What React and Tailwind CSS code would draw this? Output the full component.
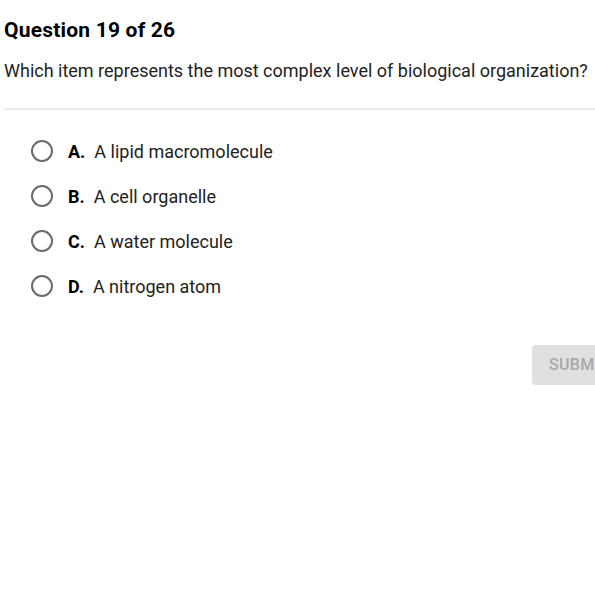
export default function App() {
  const options = [
    ["A.", "A lipid macromolecule"],
    ["B.", "A cell organelle"],
    ["C.", "A water molecule"],
    ["D.", "A nitrogen atom"],
  ];
  return (
    <div className="w-[595px] h-[594px] bg-white overflow-hidden relative" style={{ fontFamily: "Roboto, sans-serif" }}>
      <div className="pl-[4px] pt-[17px]">
        <div className="text-[21px] font-bold text-black leading-[26px] tracking-[0.2px]">Question 19 of 26</div>
        <div className="mt-[17px] text-[18px] text-[#222] leading-[22px] whitespace-nowrap">
          Which item represents the most complex level of biological organization?
        </div>
      </div>
      <div className="ml-[4px] mt-[26px] h-[2px] bg-[#ececec]" />
      <div className="pl-[31px] pt-[30px] flex flex-col gap-[23px]">
        {options.map(([l, t]) => (
          <div key={l} className="flex items-center h-[22px]">
            <div className="w-[22px] h-[22px] rounded-full border-2 border-[#6b6b6b]" />
            <span className="ml-[15px] text-[18px] font-bold text-black">{l}</span>
            <span className="ml-[9px] text-[18px] text-[#222]">{t}</span>
          </div>
        ))}
      </div>
      <div className="flex justify-end mt-[48px]">
        <div className="ml-auto w-[100px] h-[40px] rounded-[4px] bg-[#e0e0e0] text-[#a8a8a8] text-[16px] font-medium flex items-center pl-[17px] translate-x-[37px] tracking-[0.3px]">
          SUBMIT
        </div>
      </div>
    </div>
  );
}
